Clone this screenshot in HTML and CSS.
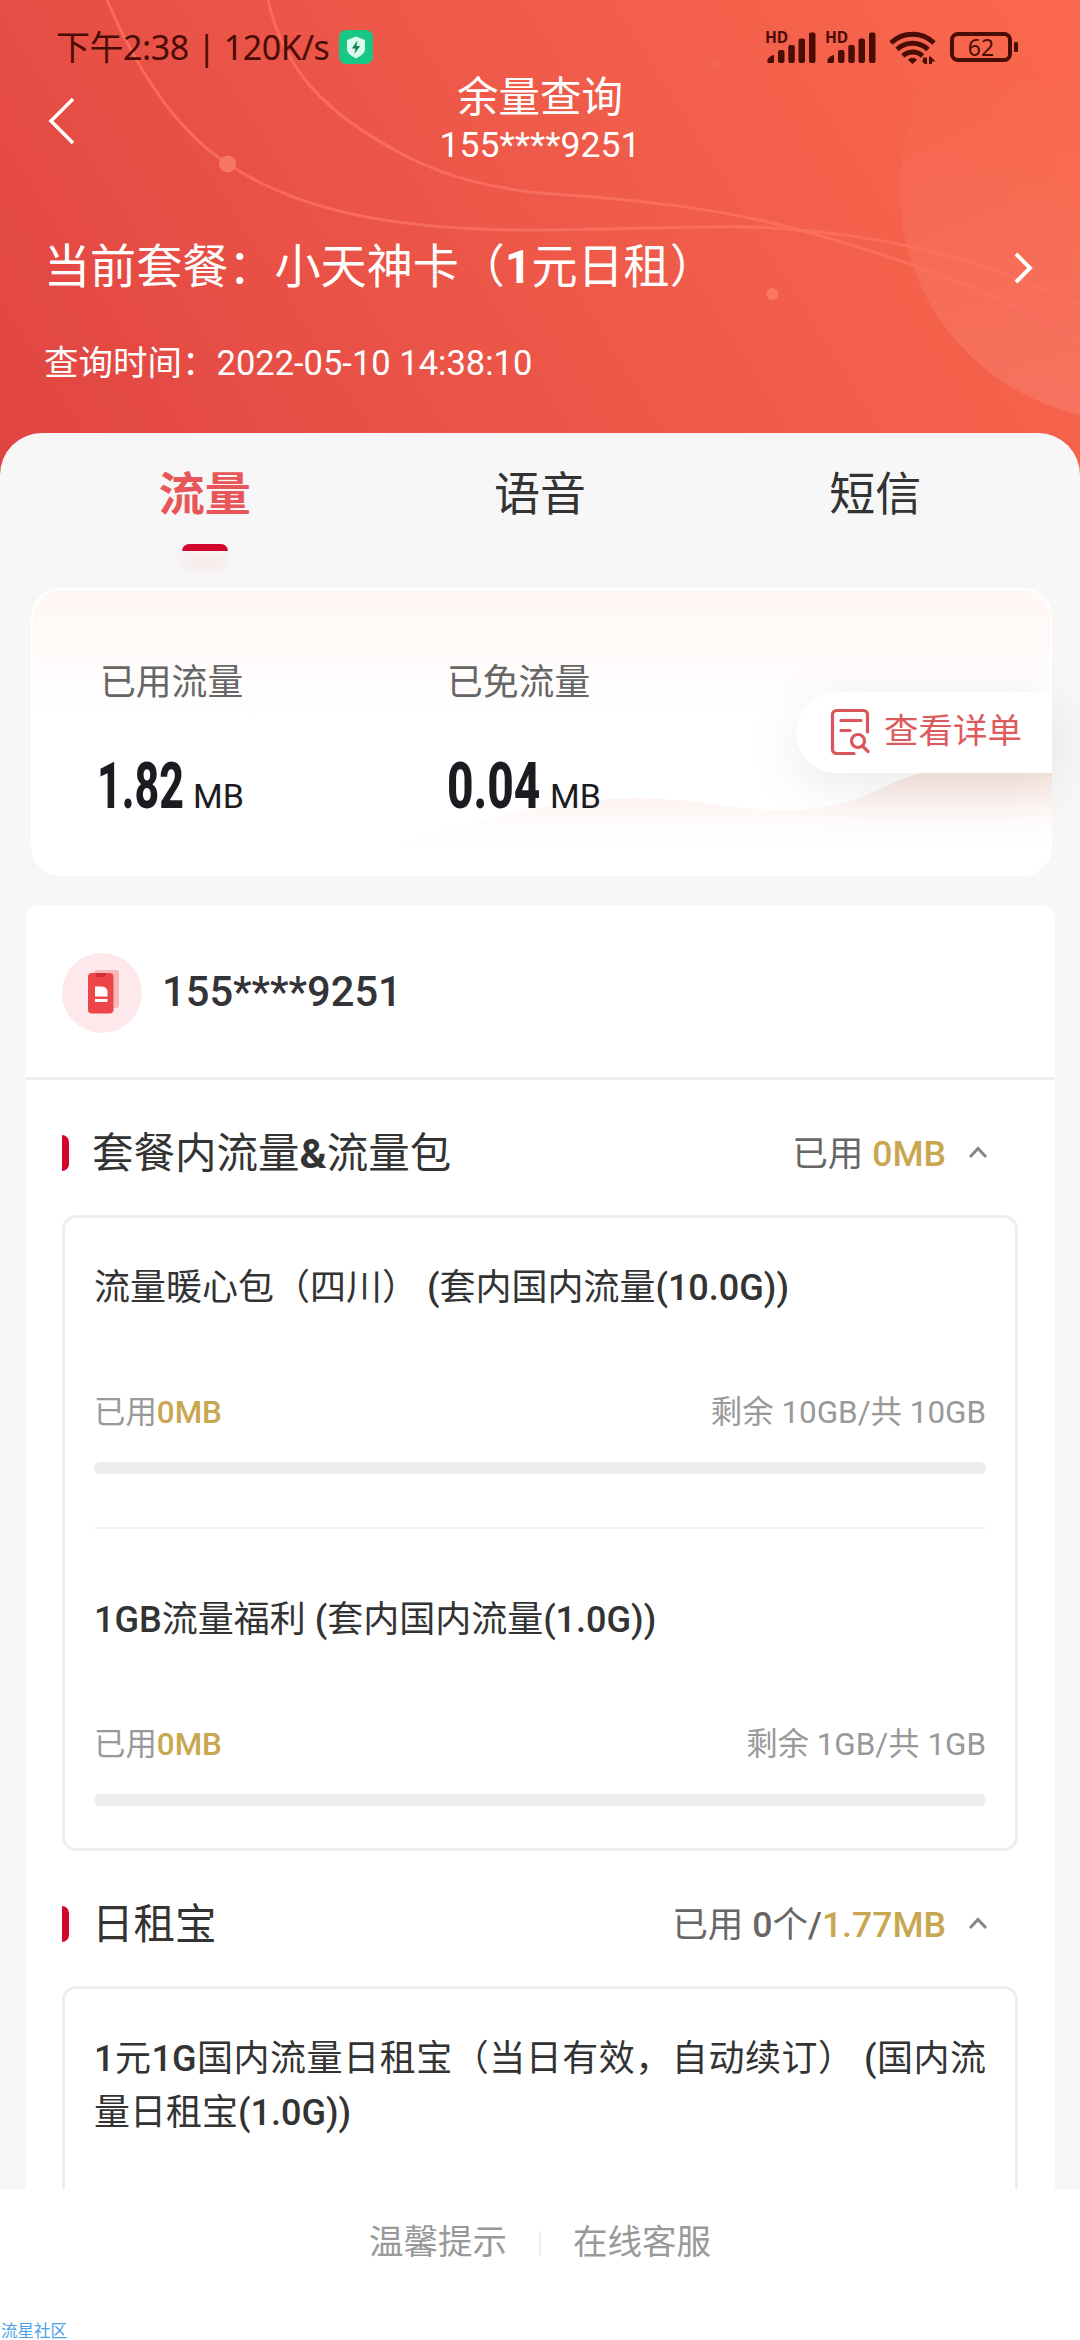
FILE: index.html
```html
<!DOCTYPE html>
<html lang="zh-CN">
<head>
<meta charset="utf-8">
<title>余量查询</title>
<link rel="stylesheet" href="styles.css">
</head>
<body>
<div class="screen">
  <header class="hero">
    <svg class="hero-art" viewBox="0 0 1080 480" width="1080" height="480">
      <defs>
        <linearGradient id="orb" x1="0" y1="0" x2="0" y2="1">
          <stop offset="0.25" stop-color="#f77d68" stop-opacity="0"/>
          <stop offset="1" stop-color="#f87866" stop-opacity="0.75"/>
        </linearGradient>
      </defs>
      <circle cx="1130" cy="190" r="230" fill="url(#orb)"/>
      <g fill="none" stroke="#fb7261" stroke-opacity="0.8" stroke-width="3">
        <path d="M107 0C145 90 190 140 228 164C300 212 400 231 540 230C640 229 700 226 750 227C880 232 980 258 1080 305"/>
        <path d="M268 0C285 75 330 115 400 153C450 180 500 189 540 193C640 200 720 208 800 230C900 258 1000 292 1080 342"/>
      </g>
      <circle cx="227.500" cy="164" r="8.500" fill="#f67764"/>
      <circle cx="772.500" cy="294" r="6" fill="#fb7762"/>
      <circle cx="714.500" cy="63" r="5.500" fill="#f8655a" fill-opacity="0.5"/>
    </svg>
    <div class="status">
      <span class="status-time">下午2:38 | 120K/s</span>
      <svg class="shield" viewBox="0 0 34 34" width="34" height="34">
        <rect width="34" height="34" rx="7" fill="#17c784"/>
        <path d="M17 6.500 26 10v9c0 4.500-4.500 7-9 9.500C12.500 26 8 23.500 8 19v-9z" fill="#d9fbee"/>
        <path d="M18.500 10.500 12.800 18.500h3.600l-1 5.500 5.800-8h-3.700z" fill="#12805a"/>
      </svg>
      <svg class="status-icons" viewBox="0 0 260 40" width="260" height="40">
        <g fill="#4a0d06">
          <text class="hd" x="3" y="19">HD</text>
          <text class="hd" x="63" y="19">HD</text>
          <g id="bars">
            <path d="M5.500 39V35.500Q8 31.500 12 31v6.500Q12 39 10.500 39Z"/>
            <rect x="16" y="26" width="6.500" height="13" rx="2"/>
            <rect x="26.300" y="21" width="6.500" height="18" rx="2"/>
            <rect x="36.500" y="14.500" width="6.500" height="24.500" rx="2"/>
            <rect x="47" y="8.500" width="6.500" height="30.500" rx="2"/>
          </g>
          <use href="#bars" x="60"/>
          <path d="M146 36a5.500 5.500 0 0 1 9 0L150.500 40Z"/>
          <path d="M161 34.500v-1h4V41h-1.500l-4-4.500H161ZM167 41v-8.500h1.500l5 5H170V41Z"/>
        </g>
        <g fill="none" stroke="#4a0d06" stroke-width="5">
          <path d="M129 19A31 31 0 0 1 172 19"/>
          <path d="M135 25.500A22.500 22.500 0 0 1 166 25.500"/>
          <path d="M141 32A14 14 0 0 1 160.500 32"/>
          <rect x="190" y="10" width="58" height="26" rx="6" stroke-width="4"/>
        </g>
        <rect x="252" y="18" width="4" height="10" rx="1.500" fill="#4a0d06"/>
        <text class="battery-level" x="219" y="31.500" text-anchor="middle" fill="#4a0d06">62</text>
      </svg>
    </div>
    <div class="nav">
      <svg viewBox="0 0 28 50" width="28" height="50"><path d="M25 3 3 25l22 22" fill="none" stroke="#fff" stroke-width="3.500"/></svg>
      <div class="nav-title">
        <h1>余量查询</h1>
        <p>155****9251</p>
      </div>
    </div>
    <div class="plan">
      <span>当前套餐：小天神卡（<b>1</b>元日租）</span>
      <svg viewBox="0 0 22 34" width="22" height="34"><path d="M3 3 17 17 3 31" fill="none" stroke="#fff" stroke-width="4"/></svg>
    </div>
    <p class="query-time">查询时间：<span>2022-05-10 14:38:10</span></p>
  </header>

  <main class="sheet">
    <nav class="tabs">
      <a class="tab active">流量</a>
      <a class="tab">语音</a>
      <a class="tab">短信</a>
    </nav>

    <section class="summary">
      <svg class="wave" viewBox="0 0 1021 288" width="1021" height="288">
        <defs>
          <linearGradient id="wave" x1="0" y1="185" x2="0" y2="265" gradientUnits="userSpaceOnUse">
            <stop offset="0" stop-color="#fbe6df"/>
            <stop offset="1" stop-color="#fff" stop-opacity="0"/>
          </linearGradient>
        </defs>
        <path d="M340 262C430 240 510 210 610 210C680 212 710 224 770 222C840 218 860 185 910 182H1021V288H340Z" fill="url(#wave)"/>
      </svg>
      <div class="stat">
        <span class="stat-label">已用流量</span>
        <span class="stat-value"><b><i>1.82</i></b>MB</span>
      </div>
      <div class="stat">
        <span class="stat-label">已免流量</span>
        <span class="stat-value"><b class="wide"><i>0.04</i></b>MB</span>
      </div>
      <a class="detail">
        <svg viewBox="0 0 40 48" width="40" height="48" fill="none" stroke="#d9575c" stroke-width="3.2" stroke-linecap="round">
          <path d="M24 45.500H6.500a4 4 0 0 1-4-4v-35a4 4 0 0 1 4-4h27a4 4 0 0 1 4 4V24"/>
          <path d="M11 12.500h20M11 22.500h9"/>
          <circle cx="28" cy="33" r="6.500"/>
          <path d="M32.500 38 38 43.500"/>
        </svg>
        <span>查看详单</span>
      </a>
    </section>

    <section class="account">
      <div class="owner">
        <svg viewBox="0 0 80 80" width="80" height="80">
          <circle cx="40" cy="40" r="40" fill="#fde9eb"/>
          <rect x="32" y="17" width="25" height="38" rx="3" fill="#f9a7a8" fill-opacity="0.75"/>
          <rect x="26" y="20" width="25.500" height="40.500" rx="4" fill="#ee4648"/>
          <path d="M34 20h10v2a2 2 0 0 1-2 2h-6a2 2 0 0 1-2-2z" fill="#c93236"/>
          <path d="M33 33.500h7a5.500 5.500 0 0 1 5.500 5.500v4.500H33z" fill="#fff"/>
          <path d="M33 46h12.500v3H33z" fill="#fff"/>
        </svg>
        <span>155****9251</span>
      </div>

      <div class="group">
        <div class="group-head">
          <h2>套餐内流量<b>&amp;</b>流量包</h2>
          <span class="used">已用 <em>0MB</em></span>
          <svg viewBox="0 0 20 14" width="20" height="14"><path d="M2 12 10 3.500 18 12" fill="none" stroke="#888" stroke-width="3"/></svg>
        </div>
        <div class="box">
          <div class="pack">
            <h3>流量暖心包（四川） <b>(</b>套内国内流量<b>(10.0G))</b></h3>
            <div class="usage"><span>已用<em>0MB</em></span><span>剩余 10GB/共 10GB</span></div>
            <div class="track"></div>
          </div>
          <div class="pack">
            <h3><b>1GB</b>流量福利 <b>(</b>套内国内流量<b>(1.0G))</b></h3>
            <div class="usage"><span>已用<em>0MB</em></span><span>剩余 1GB/共 1GB</span></div>
            <div class="track"></div>
          </div>
        </div>
      </div>

      <div class="group">
        <div class="group-head">
          <h2>日租宝</h2>
          <span class="used">已用 <b>0</b>个<b>/</b><em>1.77MB</em></span>
          <svg viewBox="0 0 20 14" width="20" height="14"><path d="M2 12 10 3.500 18 12" fill="none" stroke="#888" stroke-width="3"/></svg>
        </div>
        <div class="box">
          <div class="pack">
            <h3>
              <span class="line full"><b>1</b>元<b>1G</b>国内流量日租宝（当日有效，自动续订） <b>(</b>国内流</span>
              <span class="line">量日租宝<b>(1.0G))</b></span>
            </h3>
          </div>
        </div>
      </div>
    </section>
  </main>

  <footer class="footer">
    <a>温馨提示</a>
    <i></i>
    <a>在线客服</a>
    <span class="mark">流星社区</span>
  </footer>
</div>
</body>
</html>
```
FILE: styles.css
```css
* { box-sizing: border-box; margin: 0; padding: 0; }

body {
  width: 1080px;
  height: 2340px;
  overflow: hidden;
  font-family: Roboto, "Noto Sans CJK SC", sans-serif;
  color: #333;
  background: #fff;
}

svg { display: block; flex: none; }
h1, h2, h3 { font-weight: 400; }
em, i { font-style: normal; }

.screen {
  display: flex;
  flex-direction: column;
  height: 2340px;
  overflow: hidden;
}

/* header */
.hero {
  position: relative;
  flex: none;
  height: 480px;
  color: #fff;
  background: linear-gradient(58deg, #e04441 0%, #ea5347 35%, #f25f4b 68%, #fa694d 100%);
}
.hero-art { position: absolute; inset: 0; }
.hero > :not(.hero-art) { position: relative; }

.status {
  display: flex;
  align-items: center;
  height: 68px;
  padding: 26px 58px 0 56px;
  color: #4a0d06;
}
.status-time {
  width: 283px;
  font: 34px/42px "Noto Sans", "Noto Sans CJK SC", sans-serif;
  letter-spacing: -.45px;
  white-space: nowrap;
}
.status-icons { margin: 0 0 7px auto; }
.hd { font: 700 15.500px "Noto Sans", sans-serif; }
.battery-level { font: 23px "Noto Sans", sans-serif; }

.nav {
  display: flex;
  align-items: center;
  height: 100px;
  padding: 6px 0 0 48px;
}
.nav-title {
  flex: 1;
  padding-right: 76px;
  text-align: center;
}
.nav-title h1 { font-size: 41.500px; line-height: 48px; }
.nav-title p { font-size: 35.500px; line-height: 47px; }

.plan {
  display: flex;
  align-items: center;
  justify-content: space-between;
  height: 60px;
  margin-top: 65px;
  padding: 0 45px 0 44px;
  font-size: 46.100px;
}
.plan svg { margin-top: 10px; }
.query-time {
  margin-top: 45px;
  padding-left: 44px;
  font-size: 34.500px;
  line-height: 50px;
}

/* sheet */
.sheet {
  position: relative;
  flex: 1;
  min-height: 0;
  margin-top: -47px;
  overflow: hidden;
  border-radius: 42px 42px 0 0;
  background: #f7f7f7;
}
.tabs {
  display: grid;
  grid-template-columns: repeat(3, 1fr);
  height: 155px;
  padding: 31px 37px 0;
}
.tab {
  display: flex;
  flex-direction: column;
  align-items: center;
  font-size: 46px;
  line-height: 60px;
}
.tab.active { font-weight: 700; color: #e8565a; }
.tab.active::after {
  content: "";
  width: 46px;
  height: 7px;
  margin-top: 20px;
  border-radius: 7px 7px 0 0;
  background: #d3062f;
  box-shadow: 0 14px 14px rgba(255, 90, 90, .18);
}

.summary {
  position: relative;
  display: flex;
  height: 288px;
  margin: 0 28px 0 31px;
  padding: 68px 0 0 67px;
  border: 2px solid #fff;
  border-radius: 30px;
  background: linear-gradient(#fff7f4, #fffcfb 30%, #fff 45%);
}
.wave {
  position: absolute;
  inset: -2px;
  border-radius: 30px;
}
.stat {
  position: relative;
  display: flex;
  flex-direction: column;
  width: 347px;
}
.stat-label {
  color: #666;
  font-size: 35.800px;
  line-height: 50px;
}
.stat-value {
  display: flex;
  align-items: baseline;
  margin-top: 41px;
  color: #1b1b21;
  font-size: 34px;
  line-height: 76px;
}
.stat-value b { width: 93px; font-size: 64px; font-weight: 800; }
.stat-value b.wide { width: 103px; }
.stat-value i {
  display: inline-block;
  margin-left: -3px;
  transform: scaleX(.67);
  transform-origin: 0 50%;
}
.stat-value .wide i { margin-left: 0; transform: scaleX(.72); }
.detail {
  position: absolute;
  top: 102px;
  right: -2px;
  display: flex;
  align-items: center;
  gap: 14px;
  width: 256px;
  height: 81px;
  padding: 0 0 2px 34px;
  border-radius: 41px 0 0 41px;
  background: #fff;
  box-shadow: 0 14px 50px rgba(110, 110, 120, .14);
  color: #dd5a5d;
  font-size: 34.500px;
  white-space: nowrap;
}
.detail span { margin-bottom: 7px; }

/* account card */
.account {
  height: 1500px;
  margin: 29px 25px 0 26px;
  border-radius: 14px 14px 0 0;
  background: #fff;
}
.owner {
  display: flex;
  align-items: center;
  gap: 20px;
  height: 175px;
  padding-left: 36px;
  border-bottom: 3px solid #eee;
  color: #333338;
  font-size: 41.700px;
  font-weight: 500;
}
.owner svg { margin-top: 3px; }
.group { padding: 0 37px 0 36px; }
.group-head {
  display: flex;
  align-items: center;
  height: 135px;
  padding: 9px 30px 0 0;
}
.group-head::before {
  content: "";
  width: 7px;
  height: 36px;
  margin: 2px 23px 0 0;
  border-radius: 0 7px 7px 0;
  background: #d3062f;
}
.group-head h2 {
  flex: 1;
  margin-bottom: 5px;
  font-size: 41.500px;
}
.group-head h2 b { font-weight: 700; }
.used {
  margin: 0 22px 4px 0;
  color: #666;
  font-size: 35.600px;
}
.used b, .pack b { font-weight: 500; }
em { color: #c9a650; font-weight: 500; }

.box {
  padding: 0 29px;
  border: 3px solid #eee;
  border-radius: 14px;
}
.pack { height: 309px; padding-top: 43px; }
.pack + .pack { height: 321px; border-top: 2px solid #f0f0f0; padding-top: 64px; }
.pack h3 {
  font-size: 36px;
  line-height: 54px;
}
.line { display: block; }
.line.full { text-align: justify; text-align-last: justify; }
.usage {
  display: flex;
  justify-content: space-between;
  margin-top: 76px;
  color: #999;
  font-size: 31.400px;
  line-height: 44px;
}
.track {
  height: 12px;
  margin-top: 27px;
  border-radius: 6px;
  background: #ededed;
}

/* footer */
.footer {
  position: relative;
  display: flex;
  flex: none;
  align-items: center;
  justify-content: center;
  gap: 32px;
  height: 151px;
  padding-bottom: 42px;
  background: #fff;
  color: #999;
  font-size: 34.500px;
}
.footer a { margin-bottom: 10px; }
.footer i { width: 2px; height: 25px; background: #eee; }
.mark {
  position: absolute;
  left: 1px;
  bottom: 0;
  color: #4d9fe6;
  font-size: 16.500px;
  line-height: 16px;
}
```
